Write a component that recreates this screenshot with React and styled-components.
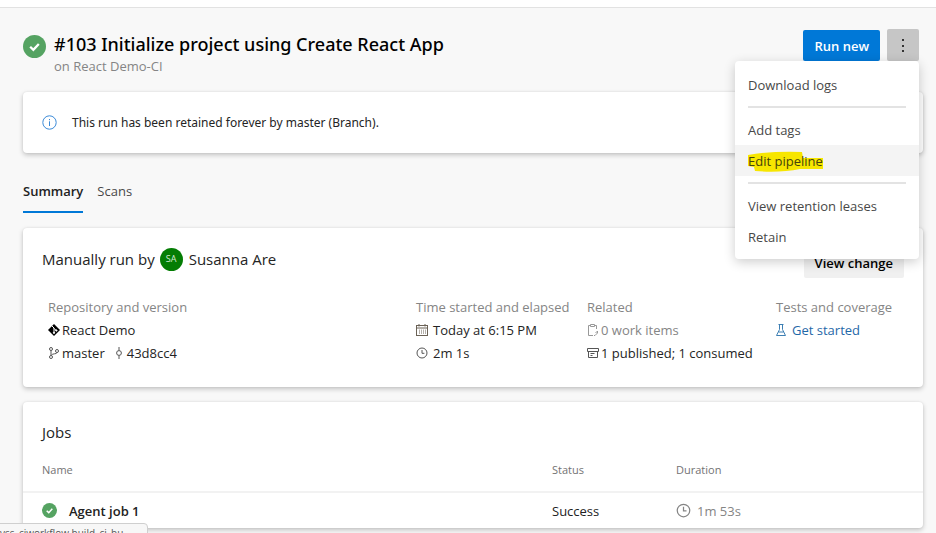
import React from "react";
import styled, { createGlobalStyle } from "styled-components";

const GlobalStyle = createGlobalStyle`
  *, *::before, *::after { box-sizing: border-box; }
  html, body { margin: 0; }
  html { overflow: hidden; }
  body {
    background: #f8f8f8;
    color: #242424;
    font: 13px/20px "Open Sans", "Noto Sans", sans-serif;
  }
  h1, h2, h3, p, dl, dd, dt { margin: 0; font: inherit; }
  button { font: inherit; border: 0; cursor: pointer; }
`;

const TopBar = styled.div`
  height: 8px;
  background: #fff;
  border-bottom: 1px solid #e2e2e2;
`;

const Page = styled.main`
  display: flex;
  flex-direction: column;
  padding: 21px 13px 5px 23px;
`;

const Header = styled.header`
  display: flex;
  align-items: flex-start;
  justify-content: space-between;
  padding-right: 4px;
`;

const TitleGroup = styled.div`
  display: grid;
  grid-template-columns: 23px auto;
  column-gap: 8px;
  padding-top: 2px;

  > svg { margin-top: 4px; }
`;

const Title = styled.h1`
  font-family: "Noto Sans", "Open Sans", sans-serif;
  font-size: 18px;
  line-height: 26px;
  font-weight: 500;
  color: #000;
`;

const Subtitle = styled.p`
  line-height: 18px;
  color: #858585;
`;

const Actions = styled.div`
  display: flex;
  align-items: center;
  gap: 7px;
`;

const RunButton = styled.button`
  height: 31px;
  padding: 2px 11px 0;
  border-radius: 2px;
  background: #0078d7;
  color: #fff;
  font-weight: 600;
`;

const MenuAnchor = styled.div`
  position: relative;
`;

const MoreButton = styled.button`
  display: grid;
  place-items: center;
  width: 32px;
  height: 32px;
  padding: 0;
  border-radius: 2px;
  background: #c6c6c6;
`;

const Menu = styled.div`
  position: absolute;
  z-index: 2;
  top: 100%;
  right: 0;
  width: 184px;
  padding: 8px 0 7px;
  border-radius: 4px;
  background: #fff;
  box-shadow: 0 3px 12px rgba(0, 0, 0, 0.2);
`;

const MenuItem = styled.button`
  display: block;
  width: 100%;
  height: 31px;
  padding: 0 13px;
  text-align: left;
  color: #484848;
  background: ${(p) => (p.$active ? "#f4f4f4" : "transparent")};
`;

const Separator = styled.hr`
  height: 2px;
  margin: 6px 13px;
  border: 0;
  background: #e3e3e3;
`;

const Marker = styled.span`
  position: relative;
  isolation: isolate;
  color: #45430c;

  svg {
    position: absolute;
    z-index: -1;
    top: -1px;
    left: 0;
    width: 75px;
    height: 21px;
  }
`;

const Card = styled.section`
  border-radius: 4px;
  background: #fff;
  box-shadow: 0 2px 5px rgba(0, 0, 0, 0.22), 0 0 2px rgba(0, 0, 0, 0.08);
`;

const Banner = styled(Card)`
  display: flex;
  align-items: center;
  gap: 15px;
  height: 61px;
  margin-top: 17px;
  padding: 0 19px;
  font-family: "Noto Sans", "Open Sans", sans-serif;
  font-size: 12px;
`;

const Tabs = styled.nav`
  display: flex;
  gap: 14px;
  margin: 19px 0 15px;
`;

const Tab = styled.button`
  height: 41px;
  padding: 0 0 1px;
  background: none;
  color: ${(p) => (p.$active ? "#222" : "#484848")};
  font-weight: ${(p) => (p.$active ? 600 : 400)};
  border-bottom: 2px solid ${(p) => (p.$active ? "#0078d7" : "transparent")};
`;

const SummaryCard = styled(Card)`
  padding: 18px 19px 24px;
`;

const SummaryHead = styled.div`
  display: flex;
  align-items: flex-start;
  justify-content: space-between;
`;

const RunBy = styled.h2`
  display: flex;
  align-items: center;
  gap: 5px;
  height: 26px;
  font-size: 15px;
`;

const Avatar = styled.span`
  display: grid;
  place-items: center;
  width: 23px;
  height: 23px;
  margin-right: 1px;
  border-radius: 50%;
  background: #047d04;
  color: #d5ebd5;
  font-size: 9px;
`;

const ViewChange = styled.button`
  height: 32px;
  padding: 2px 11px 0;
  border-radius: 2px;
  background: #f0f0f0;
  font-weight: 600;
`;

const Facts = styled.dl`
  display: grid;
  grid-template-columns: 368fr 171fr 189fr 128fr;
  margin: 19px 0 0 6px;
`;

const Fact = styled.div`
  display: flex;
  flex-direction: column;
  gap: 3px;
  white-space: nowrap;

  dt { color: #858585; }
`;

const Line = styled.dd`
  display: flex;
  align-items: center;
  gap: ${(p) => p.$gap || 2}px;
  color: ${(p) => (p.$muted ? "#858585" : "#242424")};
`;

const Commit = styled.span`
  display: flex;
  align-items: center;
  gap: 4px;
  margin-left: 8px;
`;

const Link = styled.a`
  color: #1f68a8;
  text-decoration: none;
`;

const JobsCard = styled(Card)`
  margin-top: 15px;
  padding-top: 17px;
`;

const JobsTitle = styled.h2`
  padding-left: 19px;
  font-size: 15px;
  line-height: 26px;
`;

const Table = styled.table`
  width: 100%;
  table-layout: fixed;
  border-collapse: collapse;

  th, td {
    padding: 0;
    text-align: left;
  }
  th {
    height: 47px;
    padding-top: 4px;
    border-bottom: 2px solid #f2f2f2;
    color: #737373;
    font-size: 11px;
    font-weight: 500;
  }
  td { height: 36px; }
  th:first-child, td:first-child { padding-left: 19px; }
`;

const Col = styled.col`
  width: ${(p) => p.$width};
`;

const Cell = styled.span`
  display: flex;
  align-items: center;
  gap: ${(p) => p.$gap}px;
  color: ${(p) => (p.$muted ? "#858585" : "#222")};
  font-weight: ${(p) => (p.$strong ? 600 : 400)};
`;

const StatusBubble = styled.div`
  position: fixed;
  z-index: 3;
  left: -1px;
  bottom: -12px;
  width: 149px;
  height: 22px;
  border: 1px solid #cfcfcf;
  border-radius: 0 4px 0 0;
  background: #f7f7f7;
  color: #555;
  font-size: 10px;
  line-height: 18px;
  white-space: nowrap;
`;

const Success = ({ size }) => (
  <svg width={size} height={size} viewBox="0 0 16 16" aria-hidden="true">
    <circle cx="8" cy="8" r="8" fill="#55a362" />
    <path d="M5 8.2 7.2 10.3 11 6.2" fill="none" stroke="#fff" strokeWidth="1.6" />
  </svg>
);

const Icon = ({ w = 12, h = w, children, color = "#555", box = "0 0 12 12" }) => (
  <svg width={w} height={h} viewBox={box} fill="none" stroke={color} strokeWidth="1" aria-hidden="true">
    {children}
  </svg>
);

const Clock = ({ size, color }) => (
  <Icon w={size} color={color}>
    <circle cx="6" cy="6" r="5" />
    <path d="M6 3v3.3h2.4" />
  </Icon>
);

export default function App() {
  return (
    <>
      <GlobalStyle />
      <TopBar />
      <Page>
        <Header>
          <TitleGroup>
            <Success size={23} />
            <div>
              <Title>#103 Initialize project using Create React App</Title>
              <Subtitle>on React Demo-CI</Subtitle>
            </div>
          </TitleGroup>
          <Actions>
            <RunButton>Run new</RunButton>
            <MenuAnchor>
              <MoreButton aria-label="More actions" aria-expanded="true">
                <svg width="4" height="16" viewBox="0 0 4 16" fill="#333">
                  <rect x="1" y="2" width="2" height="2" />
                  <rect x="1" y="8" width="2" height="2" />
                  <rect x="1" y="13" width="2" height="2" />
                </svg>
              </MoreButton>
              <Menu role="menu">
                <MenuItem role="menuitem">Download logs</MenuItem>
                <Separator />
                <MenuItem role="menuitem">Add tags</MenuItem>
                <MenuItem role="menuitem" $active>
                  <Marker>
                    <svg viewBox="0 0 75 21" preserveAspectRatio="none" aria-hidden="true">
                      <path d="M0 4 Q22 0 54 1 L55 7 L75 7 L75 18 L52 18 Q32 22 7 20 L6 16 L0 15Z" fill="#f7e600" />
                    </svg>
                    Edit pipeline
                  </Marker>
                </MenuItem>
                <Separator />
                <MenuItem role="menuitem">View retention leases</MenuItem>
                <MenuItem role="menuitem">Retain</MenuItem>
              </Menu>
            </MenuAnchor>
          </Actions>
        </Header>

        <Banner>
          <Icon w={15} color="#3b8ad8" box="0 0 15 15">
            <circle cx="7.5" cy="7.5" r="6.7" />
            <path d="M7.5 6.3V11M7.5 4v1.2" />
          </Icon>
          <p>This run has been retained forever by master (Branch).</p>
        </Banner>

        <Tabs>
          <Tab $active>Summary</Tab>
          <Tab>Scans</Tab>
        </Tabs>

        <SummaryCard>
          <SummaryHead>
            <RunBy>
              Manually run by <Avatar>SA</Avatar> Susanna Are
            </RunBy>
            <ViewChange>View change</ViewChange>
          </SummaryHead>
          <Facts>
            <Fact>
              <dt>Repository and version</dt>
              <Line>
                <Icon w={12} color="#fff">
                  <path d="M6 0 12 6 6 12 0 6Z" fill="#000" stroke="none" />
                  <path d="M4 2 6 4V9M6 4.300 8.200 6.500" />
                  <circle cx="6" cy="8.800" r=".7" fill="#fff" />
                  <circle cx="8.300" cy="6.500" r=".7" fill="#fff" />
                </Icon>
                React Demo
              </Line>
              <Line>
                <Icon>
                  <circle cx="3" cy="2" r="1.5" />
                  <circle cx="3" cy="10" r="1.5" />
                  <circle cx="9" cy="4" r="1.5" />
                  <path d="M3 3.5v5M9 5.5C9 7.5 4.5 6 3.3 8.3" />
                </Icon>
                master
                <Commit>
                  <Icon w={8} h={12} box="0 0 8 12">
                    <path d="M4 0v3.5M4 8.5V12" />
                    <circle cx="4" cy="6" r="2.4" />
                  </Icon>
                  43d8cc4
                </Commit>
              </Line>
            </Fact>
            <Fact>
              <dt>Time started and elapsed</dt>
              <Line $gap={5}>
                <Icon color="#6b6256">
                  <rect x=".5" y="1.5" width="11" height="10" />
                  <path d="M.5 4h11M3 0v2.5M9 0v2.5" />
                  <path d="M3.500 5.500v4.500M5.500 5.500v4.500M7.500 5.500v4.500M9.500 5.500v4.500" opacity=".5" />
                </Icon>
                Today at 6:15 PM
              </Line>
              <Line $gap={5}>
                <Clock size={12} color="#555" />
                2m 1s
              </Line>
            </Fact>
            <Fact>
              <dt>Related</dt>
              <Line $muted>
                <Icon w={12} h={12} color="#999" box="0 0 12 12">
                  <path d="M3.500 1.500h-2v10h4.500M7.500 1.500h2V5M3.500.5h4v2h-4ZM10.500 7v2l-2.500 2.500h-1M10.500 7l-2 2" />
                </Icon>
                0 work items
              </Line>
              <Line>
                <Icon w={12}>
                  <path d="M.5 1.5h11v3H.5ZM1.5 4.5v6h9v-6M3.500 6.500h4M3.500 8.500h2" />
                </Icon>
                1 published; 1 consumed
              </Line>
            </Fact>
            <Fact>
              <dt>Tests and coverage</dt>
              <Line $gap={6}>
                <Icon w={10} h={12} color="#3d7fb3" box="0 0 10 12">
                  <path d="M2.500.5h5M3.500.5v5L.5 11.500h9L6.500 5.500v-5M2.500 8h5" />
                </Icon>
                <Link href="#tests">Get started</Link>
              </Line>
            </Fact>
          </Facts>
        </SummaryCard>

        <JobsCard>
          <JobsTitle>Jobs</JobsTitle>
          <Table>
            <colgroup>
              <Col $width="auto" />
              <Col $width="124px" />
              <Col $width="247px" />
            </colgroup>
            <thead>
              <tr>
                <th scope="col">Name</th>
                <th scope="col">Status</th>
                <th scope="col">Duration</th>
              </tr>
            </thead>
            <tbody>
              <tr>
                <td>
                  <Cell $gap={12} $strong>
                    <Success size={15} />
                    Agent job 1
                  </Cell>
                </td>
                <td>
                  <Cell>Success</Cell>
                </td>
                <td>
                  <Cell $gap={6} $muted>
                    <Clock size={15} color="#858585" />
                    1m 53s
                  </Cell>
                </td>
              </tr>
            </tbody>
          </Table>
        </JobsCard>
      </Page>
      <StatusBubble>vss_ciworkflow.build_ci_bu</StatusBubble>
    </>
  );
}
